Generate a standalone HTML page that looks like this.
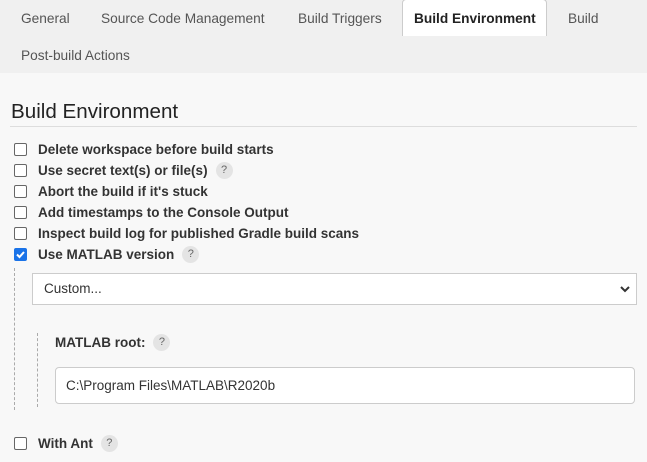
<!DOCTYPE html>
<html><head><style>
body{margin:0;width:647px;height:462px;background:#f8f8f8;font-family:"Liberation Sans",sans-serif;color:#333;position:relative;overflow:hidden}
.tabs{position:absolute;left:0;top:0;width:647px;height:73px;background:#f0f0f0}
.t{position:absolute;font-size:13.7px;color:#555}
.act{position:absolute;left:402px;top:-1px;width:143px;height:36px;background:#fff;border:1px solid #ccc;border-bottom:none;border-radius:4px 4px 0 0}
h1{position:absolute;left:11px;top:100px;margin:0;font-size:20.6px;font-weight:normal;color:#222}
.hr{position:absolute;left:10px;top:126px;width:627px;height:1px;background:#ddd}
.row{position:absolute;left:14px;font-size:13.5px;font-weight:bold;color:#333;height:18px;line-height:18px}
.cb{position:absolute;left:0;top:2px;width:11px;height:11px;border:1px solid #666;border-radius:2px;background:#fff}
.row span.l{position:absolute;left:24px;white-space:nowrap}
.q{display:inline-block;width:17px;height:17px;border-radius:50%;background:#e4e4e4;color:#666;font-size:11px;text-align:center;line-height:17px;font-weight:normal;margin-left:8px;vertical-align:top}
.chk{background:#1a73e8;border-color:#1a73e8}
</style></head><body>
<div class="tabs">
<div class="act"></div>
<div class="t" style="left:21px;top:11px">General</div>
<div class="t" style="left:101px;top:11px">Source Code Management</div>
<div class="t" style="left:298px;top:11px">Build Triggers</div>
<div class="t" style="left:414px;top:11px;font-weight:bold;color:#222">Build Environment</div>
<div class="t" style="left:568px;top:11px">Build</div>
<div class="t" style="left:21px;top:48px">Post-build Actions</div>
</div>
<h1>Build Environment</h1>
<div class="hr"></div>
<div class="row" style="top:141px"><div class="cb"></div><span class="l">Delete workspace before build starts</span></div>
<div class="row" style="top:162px"><div class="cb"></div><span class="l">Use secret text(s) or file(s)<span class="q">?</span></span></div>
<div class="row" style="top:183px"><div class="cb"></div><span class="l">Abort the build if it's stuck</span></div>
<div class="row" style="top:204px"><div class="cb"></div><span class="l">Add timestamps to the Console Output</span></div>
<div class="row" style="top:225px"><div class="cb"></div><span class="l">Inspect build log for published Gradle build scans</span></div>
<div class="row" style="top:246px"><div class="cb chk"><svg width="11" height="11" style="position:absolute;left:0;top:0"><path d="M2 5.5l2.5 2.5 4.5-5" stroke="#fff" stroke-width="2" fill="none"/></svg></div><span class="l">Use MATLAB version<span class="q">?</span></span></div>
<div style="position:absolute;left:14px;top:268px;height:142px;border-left:1.5px dashed #aaa"></div>
<div style="position:absolute;left:32px;top:273px;width:603px;height:30px;background:#fff;border:1px solid #ccc;font-size:13.5px;line-height:30px;text-indent:11px;color:#333">Custom...<svg width="10" height="7" style="position:absolute;right:6px;top:12px"><path d="M1 1l4 4 4-4" stroke="#333" stroke-width="2" fill="none"/></svg></div>
<div style="position:absolute;left:37px;top:333px;height:74px;border-left:1.5px dashed #aaa"></div>
<div class="row" style="top:334px;left:55px"><span style="white-space:nowrap">MATLAB root:<span class="q">?</span></span></div>
<div style="position:absolute;left:55px;top:367px;width:578px;height:35px;background:#fff;border:1.5px solid #ccc;border-radius:4px;font-size:13.5px;line-height:35px;text-indent:10px;color:#333">C:\Program Files\MATLAB\R2020b</div>
<div class="row" style="top:435px"><div class="cb"></div><span class="l">With Ant<span class="q">?</span></span></div>
</body></html>
